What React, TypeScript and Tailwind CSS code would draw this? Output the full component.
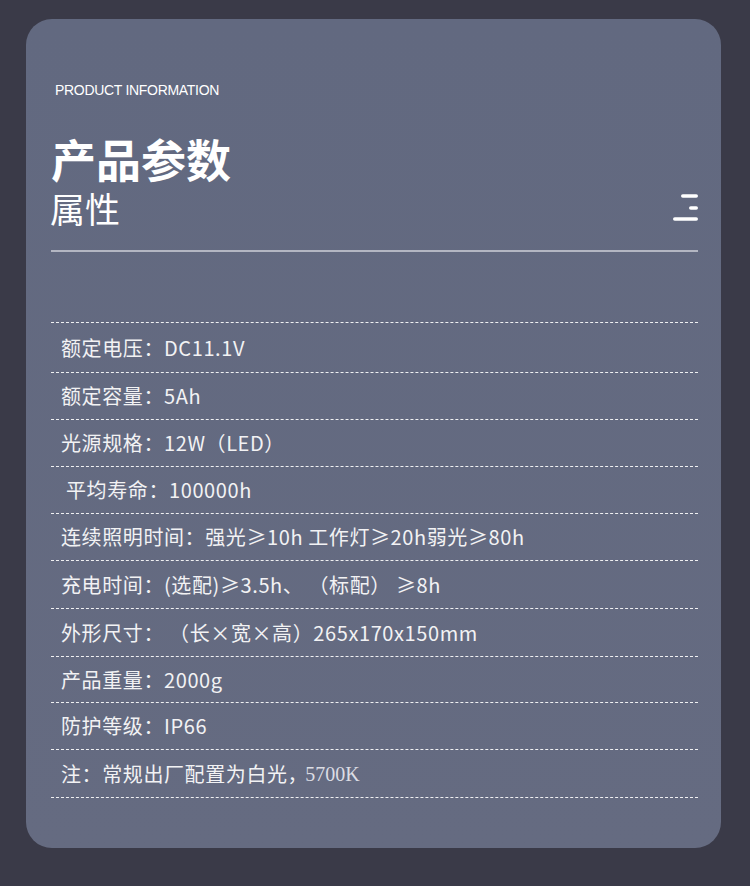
const rows = [
  { text: '额定电压：DC11.1V', h: 'h-[50px]' },
  { text: '额定容量：5Ah', h: 'h-[47px]' },
  { text: '光源规格：12W（LED）', h: 'h-[47px]' },
  { text: '平均寿命：100000h', h: 'h-[47px]', indent: true },
  { text: '连续照明时间：强光≥10h 工作灯≥20h弱光≥80h', h: 'h-[47px]' },
  { text: '充电时间：(选配)≥3.5h、 （标配） ≥8h', h: 'h-[48px]' },
  { text: '外形尺寸： （长×宽×高）265x170x150mm', h: 'h-[48px]' },
  { text: '产品重量：2000g', h: 'h-[46px]' },
  { text: '防护等级：IP66', h: 'h-[47px]' },
];

const MenuIcon = () => (
  <svg width="28" height="28" viewBox="0 0 28 28" className="mb-[8px]">
    <line x1="12.75" y1="3" x2="26.25" y2="3" stroke="#fff" strokeWidth="3.5" strokeLinecap="round" />
    <line x1="20.75" y1="15" x2="26.25" y2="15" stroke="#fff" strokeWidth="3.5" strokeLinecap="round" />
    <line x1="4.75" y1="26" x2="26.25" y2="26" stroke="#fff" strokeWidth="3.5" strokeLinecap="round" />
  </svg>
);

export default function App() {
  return (
    <div
      className="w-[750px] h-[886px] bg-[#3a3a48] pt-[19px] pl-[26px]"
      style={{ fontFamily: '"Noto Sans CJK SC", "Noto Sans", sans-serif' }}
    >
      <div className="w-[695px] h-[829px] rounded-[26px] bg-gradient-to-b from-[#626980] to-[#656b81] pl-[25px] pr-[23px] pt-[64px]">
        <div
          className="ml-[4px] text-[14px] text-white tracking-[-0.3px] leading-none"
          style={{ fontFamily: '"Liberation Sans", Arial, sans-serif' }}
        >
          PRODUCT INFORMATION
        </div>

        <div className="flex items-end justify-between mt-[36px] pb-[21px] border-b-2 border-[#b3b6c2]">
          <div className="text-white">
            <div className="text-[45px] font-bold leading-[52px]">产品参数</div>
            <div className="mt-[2px] text-[35px] leading-[42px] -ml-[1px]">属性</div>
          </div>
          <MenuIcon />
        </div>

        <div className="mt-[70px] border-t border-dashed border-white/90">
          {rows.map((row, i) => (
            <div
              key={i}
              className={`${row.h} flex items-center border-b border-dashed border-white/90 pl-[10px] text-[20px] tracking-[0.6px] text-[#f2f2f4] whitespace-pre`}
            >
              <span className={row.indent ? 'pl-[5px]' : ''}>{row.text}</span>
            </div>
          ))}
          <div className="h-[48px] flex items-center border-b border-dashed border-white/90 pl-[10px] text-[20px] tracking-[0.6px] text-[#f2f2f4]">
            <span>注：常规出厂配置为白光，</span>
            <span
              className="text-[20px] tracking-normal text-[#dcdde4] -ml-[3px]"
              style={{ fontFamily: '"Liberation Serif", "Times New Roman", serif' }}
            >
              5700K
            </span>
          </div>
        </div>
      </div>
    </div>
  );
}
